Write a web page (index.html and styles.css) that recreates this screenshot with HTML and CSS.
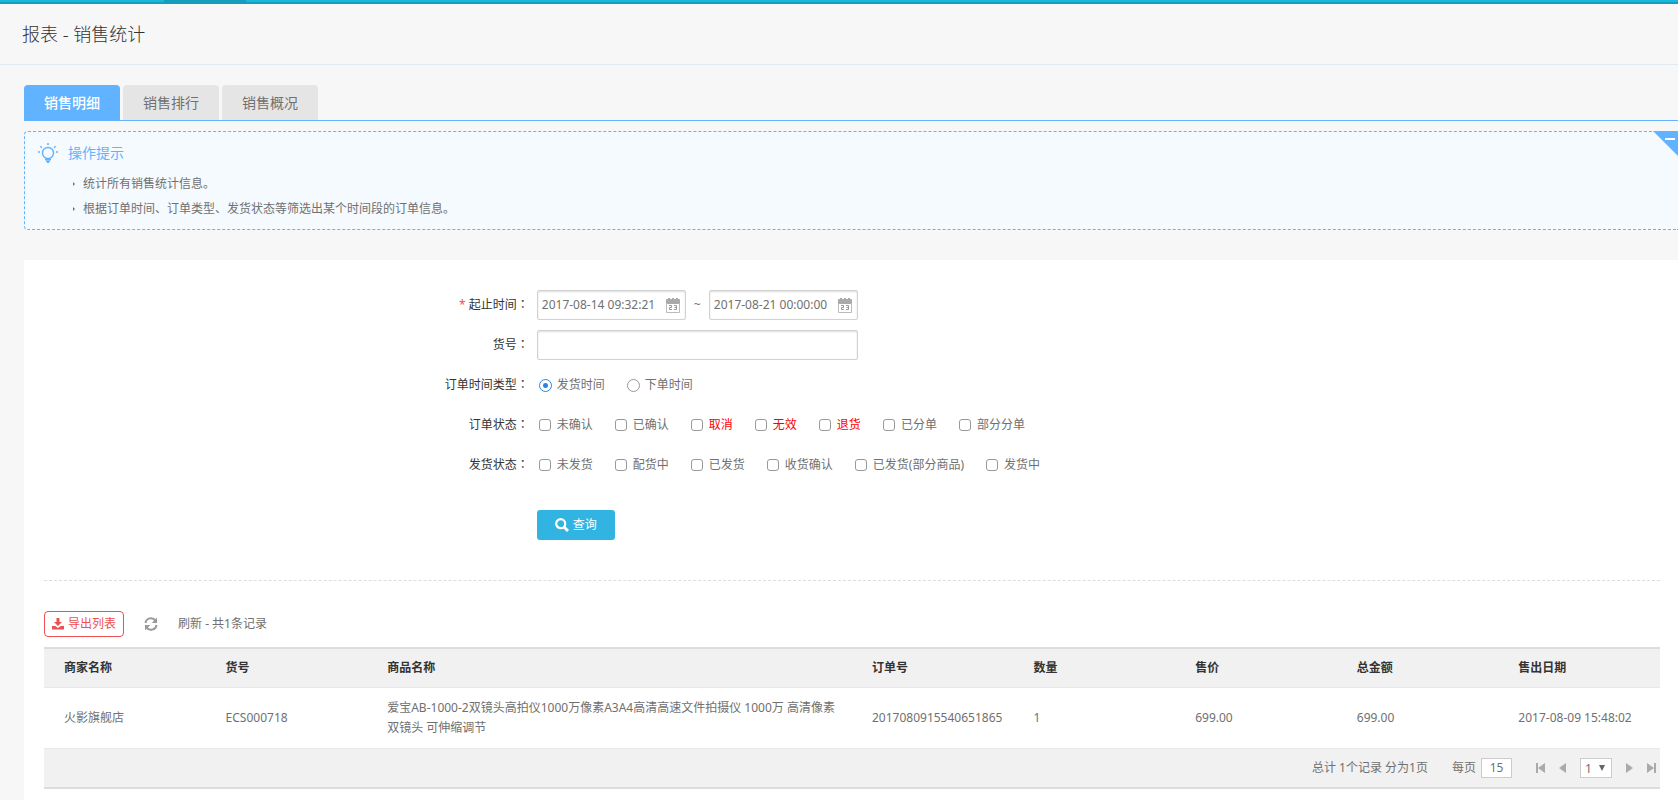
FILE: index.html
```
<!DOCTYPE html>
<html lang="zh-CN">
<head>
    <meta charset="UTF-8">
    <meta name="viewport" content="width=device-width, initial-scale=1.0">
    <title>报表 - 销售统计</title>
    <link rel="stylesheet" href="styles.css">
</head>
<body>
    <div class="topbar"><span class="topbar-current"></span></div>
    <h1 class="title">报表 - 销售统计</h1>

    <div class="content">
        <nav class="tabs">
            <a href="#" class="tab active">销售明细</a>
            <a href="#" class="tab">销售排行</a>
            <a href="#" class="tab">销售概况</a>
        </nav>

        <div class="explain">
            <div class="explain-title">
                <svg class="bulb" viewBox="0 0 20 20" width="20" height="20" fill="none" stroke="#62b3ff" stroke-width="1.4">
                    <circle cx="10" cy="10" r="5.5"/>
                    <path d="M9 1h2M0 9h2M18 9h2M2.4 3.4l1.6 1.4M17.6 3.4L16 4.8M7 16.5h6M8 18.2h4M9 19.6h2"/>
                </svg>
                <h4>操作提示</h4>
            </div>
            <ul>
                <li>统计所有销售统计信息。</li>
                <li>根据订单时间、订单类型、发货状态等筛选出某个时间段的订单信息。</li>
            </ul>
            <button type="button" class="fold" aria-label="收起提示"></button>
        </div>

        <div class="flexilist">
            <form class="search">
                <div class="item">
                    <label class="label" for="start"><em>*</em> 起止时间<i lang="zh-TW">：</i></label>
                    <div class="value">
                        <span class="date">
                            <input type="text" id="start" class="text" value="2017-08-14 09:32:21">
                            <svg viewBox="0 0 14 15" width="14" height="15"><path fill="#aaa" d="M0 2q0-1 1-1h1V0h2v1h2V0h2v1h2V0h2v1h1q1 0 1 1v4H0z"/><path fill="none" stroke="#bbb" d="M.5 5v9.500h13V5"/><path fill="none" stroke="#999" d="M3 7.500h2.500v2H3.500v2H6M8 7.500h2.500v4H8M8.500 9.500h2"/></svg>
                        </span>
                        <span class="tilde">~</span>
                        <span class="date">
                            <input type="text" id="end" class="text" aria-label="结束时间" value="2017-08-21 00:00:00">
                            <svg viewBox="0 0 14 15" width="14" height="15"><path fill="#aaa" d="M0 2q0-1 1-1h1V0h2v1h2V0h2v1h2V0h2v1h1q1 0 1 1v4H0z"/><path fill="none" stroke="#bbb" d="M.5 5v9.500h13V5"/><path fill="none" stroke="#999" d="M3 7.500h2.500v2H3.500v2H6M8 7.500h2.500v4H8M8.500 9.500h2"/></svg>
                        </span>
                    </div>
                </div>
                <div class="item">
                    <label class="label" for="goods_sn">货号<i lang="zh-TW">：</i></label>
                    <div class="value"><input type="text" id="goods_sn" class="text text-long"></div>
                </div>
                <div class="item">
                    <div class="label">订单时间类型<i lang="zh-TW">：</i></div>
                    <div class="value">
                        <label class="check"><input type="radio" name="time_type" checked>发货时间</label>
                        <label class="check"><input type="radio" name="time_type">下单时间</label>
                    </div>
                </div>
                <div class="item">
                    <div class="label">订单状态<i lang="zh-TW">：</i></div>
                    <div class="value">
                        <label class="check"><input type="checkbox">未确认</label>
                        <label class="check"><input type="checkbox">已确认</label>
                        <label class="check red"><input type="checkbox">取消</label>
                        <label class="check red"><input type="checkbox">无效</label>
                        <label class="check red"><input type="checkbox">退货</label>
                        <label class="check"><input type="checkbox">已分单</label>
                        <label class="check"><input type="checkbox">部分分单</label>
                    </div>
                </div>
                <div class="item">
                    <div class="label">发货状态<i lang="zh-TW">：</i></div>
                    <div class="value">
                        <label class="check"><input type="checkbox">未发货</label>
                        <label class="check"><input type="checkbox">配货中</label>
                        <label class="check"><input type="checkbox">已发货</label>
                        <label class="check"><input type="checkbox">收货确认</label>
                        <label class="check"><input type="checkbox">已发货(部分商品)</label>
                        <label class="check"><input type="checkbox">发货中</label>
                    </div>
                </div>
                <div class="item item-btn">
                    <div class="label"></div>
                    <div class="value">
                        <button type="button" class="btn">
                            <svg viewBox="0 0 14 14" width="14" height="14" fill="none" stroke="#fff"><circle cx="5.700" cy="5.700" r="4.500" stroke-width="2.200"/><path stroke-width="2.800" d="M9 9l4 4"/></svg>查询
                        </button>
                    </div>
                </div>
            </form>

            <div class="list-head">
                <button type="button" class="export">
                    <svg viewBox="0 0 12 12" width="12" height="12" fill="#ec5051"><path d="M4.500 0h3v4H10L6 8 2 4h2.500z"/><path d="M0 8h3.200L6 10l2.800-2H12v3.500H0z"/></svg>导出列表
                </button>
                <button type="button" class="refresh" aria-label="刷新">
                    <svg viewBox="0 0 14 14" width="14" height="14"><path fill="none" stroke="#999" stroke-width="2" d="M1.500 6A5.500 5.500 0 0 1 11.500 3.600M12.500 8A5.500 5.500 0 0 1 2.500 10.400"/><path fill="#999" d="M13 .5V6H7.800zM1 13.500V8h5.200z"/></svg>
                </button>
                <span>刷新 - 共1条记录</span>
            </div>

            <table class="list">
                <thead>
                    <tr>
                        <th>商家名称</th>
                        <th>货号</th>
                        <th class="wide">商品名称</th>
                        <th>订单号</th>
                        <th>数量</th>
                        <th>售价</th>
                        <th>总金额</th>
                        <th>售出日期</th>
                    </tr>
                </thead>
                <tbody>
                    <tr>
                        <td>火影旗舰店</td>
                        <td>ECS000718</td>
                        <td>爱宝AB-1000-2双镜头高拍仪1000万像素A3A4高清高速文件拍摄仪 1000万 高清像素 双镜头 可伸缩调节</td>
                        <td>2017080915540651865</td>
                        <td>1</td>
                        <td>699.00</td>
                        <td>699.00</td>
                        <td>2017-08-09 15:48:02</td>
                    </tr>
                </tbody>
            </table>

            <div class="pager">
                <span>总计 1个记录 分为1页</span>
                <label class="per-page">每页<input type="text" value="15"></label>
                <div class="pages">
                    <a href="#" aria-label="首页"><svg viewBox="0 0 9 10" width="9" height="10"><path d="M0 0h2v10H0zM9 0v10L2 5z"/></svg></a>
                    <a href="#" aria-label="上一页"><svg viewBox="0 0 7 10" width="7" height="10"><path d="M7 0v10L0 5z"/></svg></a>
                    <span class="jump">
                        <select aria-label="页码"><option>1</option></select>
                        <svg viewBox="0 0 6 6" width="6" height="6"><path d="M0 0h6L3 6z"/></svg>
                    </span>
                    <a href="#" aria-label="下一页"><svg viewBox="0 0 7 10" width="7" height="10"><path d="M0 0v10l7-5z"/></svg></a>
                    <a href="#" aria-label="末页"><svg viewBox="0 0 9 10" width="9" height="10"><path d="M7 0h2v10H7zM0 0v10l7-5z"/></svg></a>
                </div>
            </div>
        </div>
    </div>
</body>
</html>
```
FILE: styles.css
```
* {
    box-sizing: border-box;
}
body {
    margin: 0;
    min-height: 100vh;
    display: flex;
    flex-direction: column;
    background: #f7f7f7;
    color: #707070;
    font: 12px/20px "Noto Sans", "Noto Sans CJK SC", sans-serif;
}
input, button, select {
    font: inherit;
    color: inherit;
    margin: 0;
}
a {
    color: inherit;
    text-decoration: none;
}
svg {
    display: block;
    flex-shrink: 0;
}
.topbar {
    height: 4px;
    background: #1ab7dc;
    border-bottom: 2px solid #159dbd;
}
.topbar-current {
    display: block;
    width: 82px;
    height: 2px;
    margin-left: 164px;
    background: #159dbd;
}
.title {
    margin: 0;
    padding: 15px 22px;
    font-size: 18px;
    font-weight: 300;
    line-height: 30px;
    color: #333;
    border-bottom: 1px solid #e2e9ee;
}
.content {
    flex: 1;
    display: flex;
    flex-direction: column;
    padding: 20px 0 0 24px;
}

/* tabs */
.tabs {
    display: flex;
    gap: 3px;
    border-bottom: 1px solid #62b3ff;
}
.tab {
    padding: 0 20px;
    font-size: 14px;
    line-height: 35px;
    background: #e5e5e5;
    border-radius: 4px 4px 0 0;
}
.tab.active {
    color: #fff;
    font-weight: 500;
    background: #62b3ff;
}

/* tips */
.explain {
    position: relative;
    margin: 10px 0 30px;
    padding: 10px 13px 8px;
    background: #f5faff;
    border: 1px dashed #62b3ff;
    border-right: 0;
    border-radius: 4px 0 0 4px;
}
.explain-title {
    display: flex;
    align-items: center;
    gap: 10px;
    color: #62b3ff;
}
.explain-title h4 {
    margin: 0;
    font-size: 14px;
    font-weight: 400;
    line-height: 22px;
}
.explain ul {
    margin: 7px 0 0;
    padding: 0 0 0 35px;
    list-style: none;
}
.explain li {
    display: flex;
    align-items: center;
    gap: 8px;
    line-height: 25px;
}
.explain li::before {
    content: "";
    border: 2px solid transparent;
    border-left-color: #707070;
    border-right: 0;
}
.fold {
    position: absolute;
    top: -1px;
    right: 0;
    width: 25px;
    height: 25px;
    padding: 0;
    border: 0;
    background: #62b3ff;
    clip-path: polygon(0 0, 100% 0, 100% 100%);
}
.fold::before {
    content: "";
    position: absolute;
    top: 7px;
    right: 3px;
    width: 10px;
    height: 2px;
    background: #fff;
}

/* search form */
.flexilist {
    flex: 1;
    padding: 30px 18px 10px 20px;
    background: #fff;
}
.search {
    display: flex;
    flex-direction: column;
    gap: 10px;
    padding-bottom: 40px;
    border-bottom: 1px dashed #ddd;
}
.item {
    display: flex;
    gap: 8px;
    line-height: 30px;
}
.item-btn {
    padding-top: 20px;
}
.label {
    width: 30%;
    text-align: right;
    color: #333;
}
.label em {
    color: #ec5051;
    font-style: normal;
}
.label i {
    font-family: "Noto Sans CJK TC", sans-serif;
    font-style: normal;
    line-height: 1;
}
.value {
    display: flex;
    align-items: center;
}
.text {
    width: 149px;
    height: 30px;
    padding: 0 4px;
    background: #fff;
    border: 1px solid #d2d2d2;
    border-radius: 2px;
    box-shadow: inset 0 1px 2px #ddd;
}
.text-long {
    width: 321px;
}
.date {
    display: flex;
    position: relative;
}
.date svg {
    position: absolute;
    top: 8px;
    right: 6px;
}
.tilde {
    width: 23px;
    text-align: center;
}
.check {
    display: flex;
    align-items: center;
    gap: 5px;
    height: 30px;
    margin: 0 20px 0 2px;
}
.check input {
    appearance: none;
    width: 13px;
    height: 13px;
    background: #fff;
    border: 1px solid #999;
    border-radius: 3px;
}
.check input[type=checkbox] {
    width: 12px;
    height: 12px;
    margin-right: 1px;
}
.check input[type=radio] {
    border-radius: 50%;
}
.check input[type=radio]:checked {
    border-color: #2a85e0;
    background: radial-gradient(circle, #2a85e0 2px, #fff 3px);
}
.red {
    color: #f00;
}
.btn {
    display: flex;
    align-items: center;
    gap: 4px;
    height: 30px;
    padding: 0 18px;
    color: #fff;
    background: #32b4e3;
    border: 0;
    border-radius: 3px;
}

/* list */
.list-head {
    display: flex;
    align-items: center;
    gap: 20px;
    padding: 30px 0 10px;
}
.export {
    display: flex;
    align-items: center;
    gap: 4px;
    height: 26px;
    padding: 0 7px;
    color: #ec5051;
    background: #fff;
    border: 1px solid #ec5051;
    border-radius: 4px;
}
.refresh {
    padding: 0;
    background: none;
    border: 0;
}
.list {
    width: 100%;
    table-layout: fixed;
    border-collapse: separate;
    border-spacing: 0;
    border-top: 2px solid #ddd;
}
.list th, .list td {
    padding: 10px 0 10px 20px;
    text-align: left;
    border-bottom: 1px solid #e8e8e8;
}
.list th {
    padding-top: 9px;
    padding-bottom: 9px;
    color: #333;
    font-weight: 700;
    background: #f1f1f1;
}
.list th:not(.wide) {
    width: 10%;
}
.list .wide {
    width: 30%;
}
.list td:nth-child(3) {
    padding-right: 10px;
}
.pager {
    display: flex;
    justify-content: flex-end;
    align-items: center;
    gap: 24px;
    height: 40px;
    padding-right: 4px;
    background: #f1f1f1;
    border-bottom: 2px solid #ddd;
}
.per-page {
    display: flex;
    gap: 5px;
}
.per-page input {
    width: 31px;
    height: 20px;
    padding: 0;
    text-align: center;
    background: #fff;
    border: 1px solid #ccc;
}
.pages {
    display: flex;
    align-items: center;
    gap: 14px;
}
.pages a {
    fill: #aaa;
}
.jump {
    display: flex;
    position: relative;
}
.jump select {
    appearance: none;
    width: 32px;
    height: 20px;
    padding: 0 4px;
    background: #fff;
    border: 1px solid #ccc;
    border-radius: 0;
}
.jump svg {
    position: absolute;
    top: 7px;
    right: 7px;
    fill: #666;
    pointer-events: none;
}
```
